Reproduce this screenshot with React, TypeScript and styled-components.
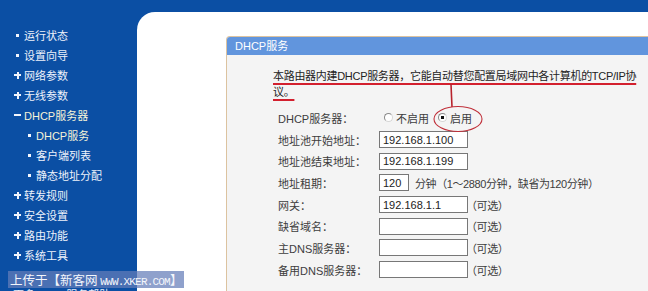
import styled, { createGlobalStyle } from "styled-components";

const GlobalStyle = createGlobalStyle`
  html, body, #root {
    margin: 0;
    height: 100%;
  }
  body {
    background: #0b4fa4;
    font-family: "Liberation Sans", "Noto Sans CJK SC", sans-serif;
    font-size: 11px;
    overflow: hidden;
  }
`;

const Page = styled.div`
  position: relative;
  display: flex;
  flex-direction: column;
  height: 100%;
  overflow: hidden;
`;

const TopBand = styled.div`
  flex: none;
  height: 12px;
`;

const Body = styled.div`
  display: flex;
  flex: 1;
  min-height: 0;
`;

const Sidebar = styled.nav`
  flex: none;
  width: 137px;
  padding-top: 13px;
  box-sizing: border-box;
`;

const MenuItem = styled.div<{ $sub?: boolean; $open?: boolean }>`
  display: flex;
  align-items: center;
  gap: 3px;
  height: 20px;
  padding-left: ${(p) => (p.$sub ? 26 : 14)}px;
  color: ${(p) => (p.$open ? "#f5f3d8" : "#eef2fb")};
  font-size: 11px;
  white-space: nowrap;
`;

const Marker = styled.span<{ $kind: "dot" | "plus" | "minus" }>`
  position: relative;
  flex: none;
  width: 7px;
  height: 7px;
  &::before,
  &::after {
    content: "";
    position: absolute;
    background: #f2f5fc;
  }
  &::before {
    left: ${(p) => (p.$kind === "dot" ? 2 : 0)}px;
    top: ${(p) => (p.$kind === "dot" ? 2 : 2.5)}px;
    width: ${(p) => (p.$kind === "dot" ? 3 : 7)}px;
    height: ${(p) => (p.$kind === "dot" ? 3 : 2)}px;
  }
  &::after {
    display: ${(p) => (p.$kind === "plus" ? "block" : "none")};
    left: 2.5px;
    top: 0;
    width: 2px;
    height: 7px;
  }
`;

const MoreLink = styled.div`
  margin-top: 20px;
  padding-left: 13px;
  height: 20px;
  line-height: 20px;
  color: #e8edf8;
  font-size: 11px;
`;

const Main = styled.main`
  display: flex;
  flex: 1;
  min-width: 0;
  background: #fff;
  border-top-left-radius: 18px;
  padding: 24px 0 0 89px;
  overflow: hidden;
`;

const Card = styled.section`
  display: flex;
  flex-direction: column;
  flex: 1;
  margin-right: -40px;
  border: 1px solid #dcc3a0;
  border-bottom: none;
  border-radius: 4px 4px 0 0;
  background: #f4f4f4;
  overflow: hidden;
`;

const CardHeader = styled.div`
  height: 18px;
  line-height: 18px;
  padding-left: 8px;
  background: #6195dd;
  color: #fff;
  font-size: 11px;
`;

const CardBody = styled.div`
  position: relative;
  flex: 1;
  padding: 13px 0 0 46px;
`;

const Intro = styled.p`
  margin: 0;
  line-height: 16px;
  color: #232323;
  letter-spacing: -0.3px;
  white-space: nowrap;
  text-decoration: underline;
  text-decoration-color: #d3202e;
  text-decoration-thickness: 1.5px;
  text-underline-offset: 3px;
`;

const Form = styled.div`
  display: grid;
  grid-template-columns: 101px auto;
  grid-auto-rows: 21.7px;
  align-items: center;
  margin: 7px 0 0 5px;
`;

const Label = styled.span`
  color: #3d3d3d;
  white-space: nowrap;
`;

const Control = styled.div`
  display: flex;
  align-items: center;
  color: #3d3d3d;
  white-space: nowrap;
`;

const TextInput = styled.input<{ $w: number }>`
  box-sizing: border-box;
  width: ${(p) => p.$w}px;
  height: 17px;
  margin: 0;
  padding: 0 3px;
  border: 1px solid #777;
  background: #fff;
  color: #222;
  font-family: "Liberation Sans", sans-serif;
  font-size: 11px;
  outline: none;
`;

const Hint = styled.span<{ $gap?: number }>`
  margin-left: ${(p) => p.$gap ?? -2}px;
  letter-spacing: -0.4px;
`;

const RadioOption = styled.label`
  display: flex;
  align-items: center;
  gap: 3px;
  margin-left: 5px;
  & + & {
    margin-left: 9px;
  }
`;

const RadioDot = styled.span<{ $checked?: boolean }>`
  box-sizing: border-box;
  width: 9px;
  height: 9px;
  border-radius: 50%;
  border: 1px solid #8a8a8a;
  border-right-color: #d6d6d6;
  border-bottom-color: #d6d6d6;
  background: ${(p) =>
    p.$checked ? "radial-gradient(circle, #111 0 1.6px, #fff 2px)" : "#fff"};
`;

const Annotation = styled.svg`
  position: absolute;
  left: 0;
  top: 0;
  width: 100%;
  height: 100%;
  pointer-events: none;
`;

const Watermark = styled.div`
  position: absolute;
  left: 8px;
  top: 271px;
  height: 17px;
  line-height: 17px;
  padding: 0 2px;
  background: rgba(100, 125, 185, 0.72);
  color: #f4f6fb;
  font-family: "Noto Sans CJK SC", sans-serif;
  font-size: 12.5px;
  white-space: nowrap;
`;

const Latin = styled.span`
  font-family: "Liberation Mono", monospace;
  font-size: 11px;
  letter-spacing: -0.8px;
`;

type Item = { text: string; kind: "dot" | "plus" | "minus"; sub?: boolean; open?: boolean };

const menu: Item[] = [
  { text: "运行状态", kind: "dot" },
  { text: "设置向导", kind: "dot" },
  { text: "网络参数", kind: "plus" },
  { text: "无线参数", kind: "plus" },
  { text: "DHCP服务器", kind: "minus", open: true },
  { text: "DHCP服务", kind: "dot", sub: true, open: true },
  { text: "客户端列表", kind: "dot", sub: true },
  { text: "静态地址分配", kind: "dot", sub: true },
  { text: "转发规则", kind: "plus" },
  { text: "安全设置", kind: "plus" },
  { text: "路由功能", kind: "plus" },
  { text: "系统工具", kind: "plus" },
];

const optionalFields = [
  { label: "网关：", value: "192.168.1.1" },
  { label: "缺省域名：", value: "" },
  { label: "主DNS服务器：", value: "" },
  { label: "备用DNS服务器：", value: "" },
];

export default function App() {
  return (
    <>
      <GlobalStyle />
      <Page>
        <TopBand />
        <Body>
          <Sidebar>
            {menu.map((m) => (
              <MenuItem key={m.text} $sub={m.sub} $open={m.open}>
                <Marker $kind={m.kind} />
                {m.text}
              </MenuItem>
            ))}
            <MoreLink>更多DHCP服务帮助</MoreLink>
          </Sidebar>

          <Main>
            <Card>
              <CardHeader>DHCP服务</CardHeader>
              <CardBody>
                <Intro>
                  本路由器内建DHCP服务器，它能自动替您配置局域网中各计算机的TCP/IP协
                  <br />
                  议。
                </Intro>

                <Form>
                  <Label>DHCP服务器：</Label>
                  <Control>
                    <RadioOption>
                      <RadioDot />
                      不启用
                    </RadioOption>
                    <RadioOption>
                      <RadioDot $checked />
                      启用
                    </RadioOption>
                  </Control>

                  <Label>地址池开始地址：</Label>
                  <Control>
                    <TextInput $w={89} readOnly value="192.168.1.100" />
                  </Control>

                  <Label>地址池结束地址：</Label>
                  <Control>
                    <TextInput $w={89} readOnly value="192.168.1.199" />
                  </Control>

                  <Label>地址租期：</Label>
                  <Control>
                    <TextInput $w={30} readOnly value="120" />
                    <Hint $gap={6}>分钟（1～2880分钟，缺省为120分钟）</Hint>
                  </Control>

                  {optionalFields.map((f) => (
                    <>
                      <Label key={f.label}>{f.label}</Label>
                      <Control key={f.label + "-c"}>
                        <TextInput $w={89} readOnly value={f.value} />
                        <Hint>（可选）</Hint>
                      </Control>
                    </>
                  ))}
                </Form>

                <Annotation>
                  <path
                    d="M224 29 L224.5 41 L225 52"
                    stroke="#b8222c"
                    strokeWidth="1.6"
                    fill="none"
                  />
                  <ellipse
                    cx="231"
                    cy="64"
                    rx="24"
                    ry="12.5"
                    stroke="#c0303a"
                    strokeWidth="1.1"
                    fill="none"
                  />
                </Annotation>
              </CardBody>
            </Card>
          </Main>
        </Body>

        <Watermark>
          上传于【新客网 <Latin>WWW.XKER.COM</Latin>】
        </Watermark>
      </Page>
    </>
  );
}
